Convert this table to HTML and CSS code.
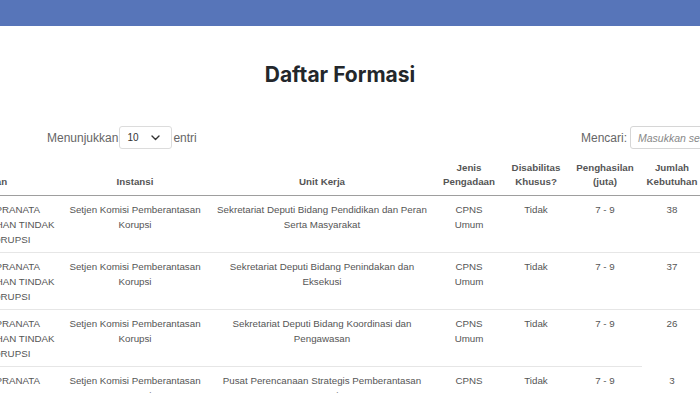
FILE: index.html
```html
<!DOCTYPE html>
<html lang="id">
<head>
<meta charset="utf-8">
<title>Daftar Formasi</title>
<link rel="stylesheet" href="styles.css">
</head>
<body>
<div class="topbar"></div>
<main class="page">
  <h1 class="title">Daftar Formasi</h1>
  <div class="controls">
    <label class="length">Menunjukkan
      <span class="select"><span class="select-val">10</span>
        <svg class="chev" width="9" height="6" viewBox="0 0 9 6"><path d="M1 1 L4.5 4.5 L8 1" fill="none" stroke="#333" stroke-width="1.4" stroke-linecap="round" stroke-linejoin="round"/></svg>
      </span>entri</label>
    <label class="search">Mencari:
      <span class="input">Masukkan sesuatu...</span>
    </label>
  </div>
  <table class="tbl">
    <colgroup>
      <col class="c1"><col class="c2"><col class="c3"><col class="c4"><col class="c5"><col class="c6"><col class="c7">
    </colgroup>
    <thead>
      <tr>
        <th class="first">Nama Jabatan</th>
        <th>Instansi</th>
        <th>Unit Kerja</th>
        <th>Jenis<br>Pengadaan</th>
        <th>Disabilitas<br>Khusus?</th>
        <th>Penghasilan<br>(juta)</th>
        <th>Jumlah<br>Kebutuhan</th>
      </tr>
    </thead>
    <tbody>
      <tr>
        <td class="first">PEGAWAI PRANATA<br>PENCEGAHAN TINDAK<br>PIDANA KORUPSI</td>
        <td>Setjen Komisi Pemberantasan<br>Korupsi</td>
        <td>Sekretariat Deputi Bidang Pendidikan dan Peran<br>Serta Masyarakat</td>
        <td>CPNS<br>Umum</td>
        <td>Tidak</td>
        <td>7 - 9</td>
        <td>38</td>
      </tr>
      <tr>
        <td class="first">PEGAWAI PRANATA<br>PENCEGAHAN TINDAK<br>PIDANA KORUPSI</td>
        <td>Setjen Komisi Pemberantasan<br>Korupsi</td>
        <td>Sekretariat Deputi Bidang Penindakan dan<br>Eksekusi</td>
        <td>CPNS<br>Umum</td>
        <td>Tidak</td>
        <td>7 - 9</td>
        <td>37</td>
      </tr>
      <tr>
        <td class="first">PEGAWAI PRANATA<br>PENCEGAHAN TINDAK<br>PIDANA KORUPSI</td>
        <td>Setjen Komisi Pemberantasan<br>Korupsi</td>
        <td>Sekretariat Deputi Bidang Koordinasi dan<br>Pengawasan</td>
        <td>CPNS<br>Umum</td>
        <td>Tidak</td>
        <td>7 - 9</td>
        <td>26</td>
      </tr>
      <tr>
        <td class="first">PEGAWAI PRANATA<br>PENCEGAHAN TINDAK<br>PIDANA KORUPSI</td>
        <td>Setjen Komisi Pemberantasan<br>Korupsi</td>
        <td>Pusat Perencanaan Strategis Pemberantasan<br>Korupsi</td>
        <td>CPNS<br>Umum</td>
        <td>Tidak</td>
        <td>7 - 9</td>
        <td class="noline">3</td>
      </tr>
    </tbody>
  </table>
</main>
</body>
</html>
```

FILE: styles.css
```css
* { box-sizing: border-box; }
html, body { margin: 0; padding: 0; }
body {
  background: #fff;
  overflow: hidden;
  width: 700px;
  height: 393px;
  font-family: "Liberation Sans", Arial, sans-serif;
  color: #666;
}
.topbar {
  height: 26px;
  background: #5775b9;
}
.page {
  width: 700px;
}
.title {
  margin: 35px 0 0 0;
  padding-right: 20px;
  text-align: center;
  font-family: Inter, "Liberation Sans", sans-serif;
  font-weight: 700;
  font-size: 21px;
  line-height: 28px;
  color: #23272b;
}
.controls {
  display: flex;
  justify-content: space-between;
  align-items: center;
  margin: 37px -90px 0 47px;
  font-size: 12px;
  color: #666;
}
.length, .search {
  display: flex;
  align-items: center;
}
.select {
  display: inline-flex;
  align-items: center;
  justify-content: space-between;
  width: 53px;
  height: 23px;
  margin: 0 1px 0 1px;
  padding: 0 11px 0 7px;
  border: 1px solid #dcdcdc;
  border-radius: 3px;
  background: #fff;
}
.select-val {
  font-size: 10px;
  color: #333;
}
.chev { display: block; }
.input {
  display: flex;
  align-items: center;
  margin-left: 3px;
  width: 160px;
  height: 23px;
  padding-left: 7px;
  border: 1px solid #d6d6d6;
  border-radius: 3px;
  font-size: 10.5px;
  font-style: italic;
  color: #888;
}
.tbl {
  margin: 6px 0 0 -60px;
  border-collapse: collapse;
  table-layout: fixed;
  width: 762px;
  font-size: 9.75px;
}
.c1 { width: 120px; }
.c2 { width: 150px; }
.c3 { width: 224px; }
.c4 { width: 70px; }
.c5 { width: 64px; }
.c6 { width: 74px; }
.c7 { width: 60px; }
.tbl th {
  font-weight: 700;
  color: #555;
  line-height: 14px;
  padding: 6px 1px 6px 1px;
  text-align: center;
  vertical-align: bottom;
  white-space: nowrap;
  border-bottom: 1px solid #9e9e9e;
}
.tbl td {
  line-height: 15px;
  padding: 6px 1px 5px 1px;
  text-align: center;
  vertical-align: top;
  white-space: nowrap;
  border-top: 1px solid #e6e6e6;
  color: #555;
}
.tbl tbody tr:first-child td { border-top: none; }
.tbl th.first, .tbl td.first {
  text-align: left;
  padding-left: 8px;
}
.tbl th.first { text-indent: -7px; }
.tbl td.noline { border-top-color: transparent; }
```
